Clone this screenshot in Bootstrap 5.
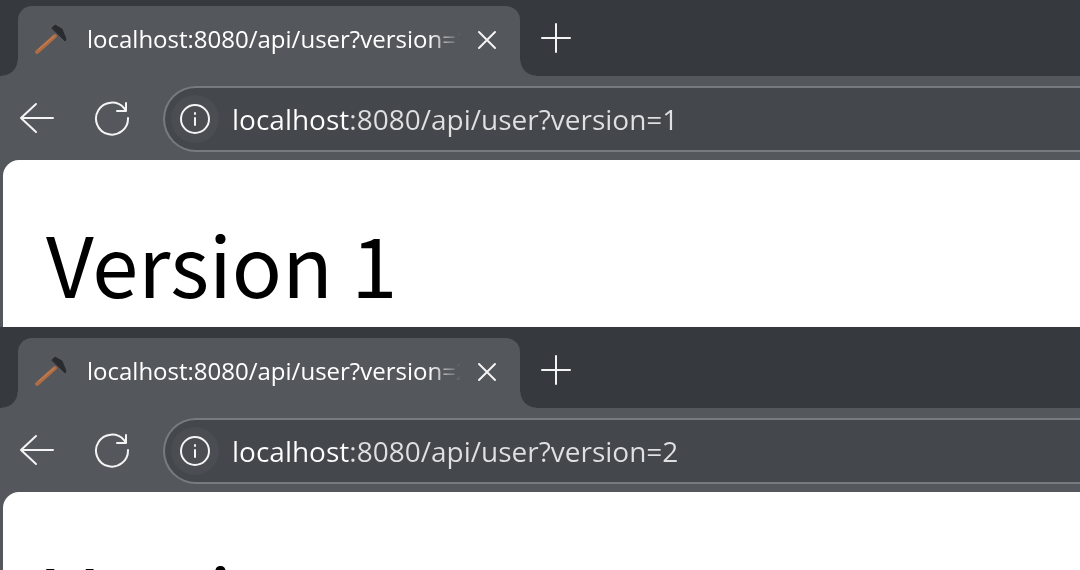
<!DOCTYPE html>
<html lang="en">
<head>
<meta charset="utf-8">
<meta name="viewport" content="width=device-width, initial-scale=1">
<title>API versions</title>
<link rel="stylesheet" href="https://cdn.jsdelivr.net/npm/bootstrap@5.3.0/dist/css/bootstrap.min.css">
<style>
  :root { --strip: #36393e; --chrome: #54575c; --field: #44474b; --edge: #777b80; }
  body { font-family: "Open Sans", "Noto Sans", sans-serif; background: var(--chrome); }
  .browser { background: var(--chrome); }
  .tab-strip { background: var(--strip); padding: 6px 0 0 18px; }
  .browser + .browser .tab-strip { padding-top: 11px; }
  .browser-tab { position: relative; width: 502px; height: 70px; padding: 0 19px 4px 16px; background: var(--chrome); border-radius: 14px 14px 0 0; }
  .browser-tab::before, .browser-tab::after { content: ""; position: absolute; bottom: 0; width: 16px; height: 16px; }
  .browser-tab::before { right: 100%; background: radial-gradient(circle at 0 0, transparent 15px, var(--chrome) 16px); }
  .browser-tab::after { left: 100%; background: radial-gradient(circle at 100% 0, transparent 15px, var(--chrome) 16px); }
  .tab-title { flex: 1 1 0; min-width: 0; margin-left: 17px; overflow: hidden; white-space: nowrap; font-size: 24px; line-height: 36px; color: #fff;
    -webkit-mask-image: linear-gradient(to right, #000 calc(100% - 36px), transparent calc(100% - 4px)); mask-image: linear-gradient(to right, #000 calc(100% - 36px), transparent calc(100% - 4px)); }
  .icon-btn { color: #f4f4f5; background: none; border: 0; padding: 0; line-height: 1; }
  .icon-btn svg, .favicon { display: block; }
  svg { fill: none; stroke: currentColor; stroke-width: 2; stroke-linecap: round; stroke-linejoin: round; }
  .new-tab { margin: 0 0 6px 20px; }
  .tool-bar { padding: 10px 0 8px 18px; }
  .reload { margin: 0 31px 0 38px; }
  .omnibox { flex: 1 1 0; min-width: 0; height: 66px; padding-left: 6px; background: var(--field); border: 2px solid var(--edge); border-right: 0; border-radius: 33px 0 0 33px; }
  .site-info { display: grid; place-items: center; width: 48px; height: 48px; border-radius: 50%; background: #4a4d52; }
  .address { flex: 1 1 0; min-width: 0; height: 44px; border: 0; padding: 0; margin-left: 13px; outline: 0; font-size: 28px;
    color: transparent; background: linear-gradient(to right, #fff 118px, #dfe0e1 118px); -webkit-background-clip: text; background-clip: text; }
  .page-view { margin-left: 3px; padding: 43px 43px 0; min-height: 167px; background: #fff; border-top-left-radius: 16px; }
  .page-view h1 { margin: 0; font: 400 83px/119px "Noto Sans CJK SC", sans-serif; color: #000; }
</style>
</head>
<body class="vh-100 overflow-hidden">
<section class="browser" aria-label="Version 1 window">
  <div class="tab-strip d-flex align-items-center">
    <div class="browser-tab d-flex align-items-center">
      <svg class="favicon" width="36" height="36" viewBox="0 0 36 36" aria-hidden="true">
        <path d="M3 31 21 15" stroke="#b06c43" stroke-width="4"/><path d="M5 28 20 15" stroke="#c98458" stroke-width="1"/>
        <path d="M18 7 21 4 28 8 32 18 31 20 26 15Z" fill="#292b2e" stroke="#292b2e" stroke-width="1"/>
      </svg>
      <span class="tab-title">localhost:8080/api/user?version=1</span>
      <button class="icon-btn ms-1 ps-1" type="button" aria-label="Close tab"><svg width="28" height="28" viewBox="0 0 28 28"><path d="m6 7 16 16M22 7 6 23"/></svg></button>
    </div>
    <button class="icon-btn new-tab" type="button" aria-label="New tab"><svg width="32" height="32" viewBox="0 0 32 32"><path d="M16 2v28M2 16h28"/></svg></button>
  </div>
  <div class="tool-bar d-flex align-items-center">
    <button class="icon-btn" type="button" aria-label="Back"><svg width="38" height="38" viewBox="0 0 38 38"><path d="M35 18H3M18 4 3 18l15 14"/></svg></button>
    <button class="icon-btn reload" type="button" aria-label="Reload"><svg width="38" height="38" viewBox="0 0 38 38"><path d="M34 18A16 16 0 1 1 30 8L32 11M32 3v8h-9"/></svg></button>
    <div class="omnibox d-flex align-items-center">
      <button class="icon-btn site-info" type="button" aria-label="Site information"><svg width="32" height="32" viewBox="0 0 32 32"><circle cx="16" cy="16" r="14"/><path d="M16 15v7"/><path d="M16 10v1"/></svg></button>
      <input class="address" type="text" aria-label="Address" value="localhost:8080/api/user?version=1" spellcheck="false">
    </div>
  </div>
  <main class="page-view"><h1>Version 1</h1></main>
</section>
<section class="browser" aria-label="Version 2 window">
  <div class="tab-strip d-flex align-items-center">
    <div class="browser-tab d-flex align-items-center">
      <svg class="favicon" width="36" height="36" viewBox="0 0 36 36" aria-hidden="true">
        <path d="M3 31 21 15" stroke="#b06c43" stroke-width="4"/><path d="M5 28 20 15" stroke="#c98458" stroke-width="1"/>
        <path d="M18 7 21 4 28 8 32 18 31 20 26 15Z" fill="#292b2e" stroke="#292b2e" stroke-width="1"/>
      </svg>
      <span class="tab-title">localhost:8080/api/user?version=2</span>
      <button class="icon-btn ms-1 ps-1" type="button" aria-label="Close tab"><svg width="28" height="28" viewBox="0 0 28 28"><path d="m6 7 16 16M22 7 6 23"/></svg></button>
    </div>
    <button class="icon-btn new-tab" type="button" aria-label="New tab"><svg width="32" height="32" viewBox="0 0 32 32"><path d="M16 2v28M2 16h28"/></svg></button>
  </div>
  <div class="tool-bar d-flex align-items-center">
    <button class="icon-btn" type="button" aria-label="Back"><svg width="38" height="38" viewBox="0 0 38 38"><path d="M35 18H3M18 4 3 18l15 14"/></svg></button>
    <button class="icon-btn reload" type="button" aria-label="Reload"><svg width="38" height="38" viewBox="0 0 38 38"><path d="M34 18A16 16 0 1 1 30 8L32 11M32 3v8h-9"/></svg></button>
    <div class="omnibox d-flex align-items-center">
      <button class="icon-btn site-info" type="button" aria-label="Site information"><svg width="32" height="32" viewBox="0 0 32 32"><circle cx="16" cy="16" r="14"/><path d="M16 15v7"/><path d="M16 10v1"/></svg></button>
      <input class="address" type="text" aria-label="Address" value="localhost:8080/api/user?version=2" spellcheck="false">
    </div>
  </div>
  <main class="page-view"><h1>Version 2</h1></main>
</section>
<script src="https://cdn.jsdelivr.net/npm/bootstrap@5.3.0/dist/js/bootstrap.bundle.min.js"></script>
</body>
</html>
